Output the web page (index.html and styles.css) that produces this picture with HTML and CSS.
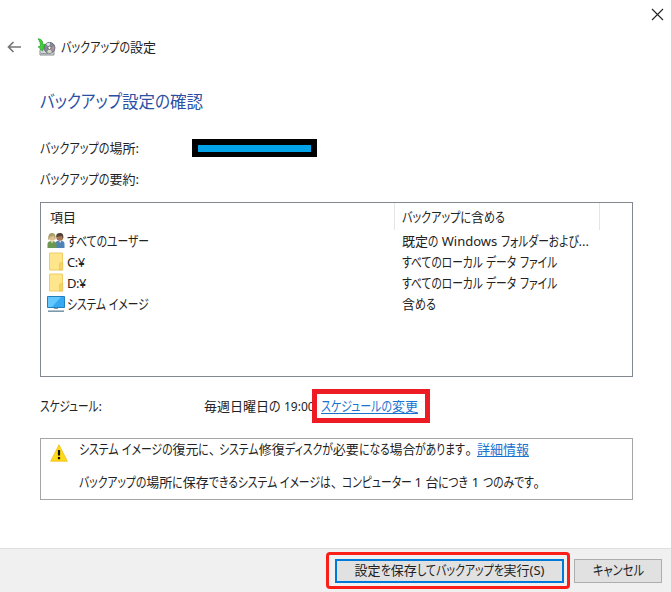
FILE: index.html
```html
<!DOCTYPE html>
<html lang="ja">
<head>
<meta charset="utf-8">
<title>バックアップの設定</title>
<link rel="stylesheet" href="styles.css">
</head>
<body>
<div class="window">
  <div class="titlebar">
    <svg class="close" width="13" height="13" viewBox="0 0 13 13"><path d="M1 1L12 12M12 1L1 12" stroke="#222" stroke-width="1.1" fill="none"/></svg>
  </div>
  <header class="nav">
    <svg class="back" width="14" height="12" viewBox="0 0 14 12"><path d="M14 6H1.5M6.5 1L1.5 6L6.5 11" fill="none" stroke="#777" stroke-width="1.7"/></svg>
    <svg class="app" width="19" height="18" viewBox="0 0 19 18">
      <path d="M3 12L6 9H15L17 12V17H3Z" fill="#d5d8da" stroke="#888e92"/>
      <path d="M4 15.5H11" stroke="#91999e"/>
      <circle cx="12.5" cy="9.8" r="5.4" fill="#85879a" stroke="#66666f"/>
      <path d="M12.5 9.8L9 6A5 5 0 0 1 13 4.8Z" fill="#dde4e8"/>
      <path d="M12.5 9.8L17.3 8.3A5 5 0 0 1 16 13.3Z" fill="#b58fa9"/>
      <path d="M12.5 9.8L15 14.3A5 5 0 0 1 10 14.3Z" fill="#d8dcc8"/>
      <circle cx="12.5" cy="9.8" r="1.7" fill="#f5f5f5" stroke="#666"/>
      <path d="M1 .8C4.5 1 6 3 6 7L8 6.2L5.5 13L1.2 8.8L3.3 8.3C3.7 5.5 3 3.5 1 .8Z" fill="#43cf3d" stroke="#29a52b" stroke-width=".8"/>
    </svg>
    <span class="t" data-width="95">バックアップの設定</span>
  </header>
  <main>
    <h1><span class="t" data-width="163">バックアップ設定の確認</span></h1>
    <div class="field location"><span class="t" data-width="99">バックアップの場所:</span><span class="redacted"></span></div>
    <div class="field summary"><span class="t" data-width="99">バックアップの要約:</span></div>
    <section class="list">
      <div class="row head"><div class="c1"><span class="t" data-width="26">項目</span></div><div class="c2"><span class="t" data-width="103">バックアップに含める</span></div></div>
      <div class="row"><div class="c1 item">
        <svg width="18" height="18" viewBox="0 0 18 18"><path d="M8.5 16V12C8.5 9.5 10 8.5 13 8.5C16 8.5 17.5 10 17.5 12V16Z" fill="#4f83b5"/><path d="M12 8.5L13.2 11L14.5 8.5Z" fill="#eee"/><circle cx="12.8" cy="5.2" r="3.5" fill="#a87654"/><path d="M9.3 5C9 1.8 10.7 1 13 1C15.5 1 17 2.7 16 6.7L14.8 4Z" fill="#54453b"/><path d="M.5 16V12C.5 10 2 9 5 9C8 9 9.5 10.3 9.5 12.5V16Z" fill="#6b9850"/><path d="M3.7 9L5 11.6L6.5 9Z" fill="#f3d4ab"/><circle cx="5" cy="5.5" r="3.2" fill="#e2bf91"/><path d="M1.3 8.5C1 3 2 1 5 1C8 1 9 3 8.4 8L6.7 3.7L3 5Z" fill="#aaa16a"/></svg>
        <span class="t" data-width="82">すべてのユーザー</span></div><div class="c2"><span class="t" data-width="187">既定の Windows フォルダーおよび...</span></div></div>
      <div class="row"><div class="c1 item">
        <svg width="18" height="19" viewBox="0 0 18 19"><path d="M2.5 1H15.5V18H2.5Z" fill="#ffe58c" stroke="#efcc65"/><path d="M12.5 18V11.5L13.5 10.5H15.8V18Z" fill="#f4d469" stroke="#e5c153" stroke-width=".6"/></svg>
        <span class="t drive">C:¥</span></div><div class="c2"><span class="t" data-width="155">すべてのローカル データ ファイル</span></div></div>
      <div class="row"><div class="c1 item">
        <svg width="18" height="19" viewBox="0 0 18 19"><path d="M2.5 1H15.5V18H2.5Z" fill="#ffe58c" stroke="#efcc65"/><path d="M12.5 18V11.5L13.5 10.5H15.8V18Z" fill="#f4d469" stroke="#e5c153" stroke-width=".6"/></svg>
        <span class="t drive">D:¥</span></div><div class="c2"><span class="t" data-width="155">すべてのローカル データ ファイル</span></div></div>
      <div class="row"><div class="c1 item">
        <svg width="18" height="18" viewBox="0 0 18 18"><path d="M.5 1.5H17.5V12.5H.5Z" fill="#35aaf2" stroke="#247fbd"/><path d="M1 2H14L5 12H1Z" fill="#64c8ff"/><path d="M7 13.5H11" stroke="#8b9aa4"/><path d="M1 16.2H17" stroke="#7999ac" stroke-width="1.6"/></svg>
        <span class="t" data-width="82">システム イメージ</span></div><div class="c2"><span class="t" data-width="34">含める</span></div></div>
    </section>
    <div class="schedule">
      <span class="label"><span class="t" data-width="62">スケジュール:</span></span>
      <span class="time"><span class="t" data-width="80">毎週日曜日の </span><span class="clock">19:00</span></span>
      <span class="highlight"><a class="t" data-width="97">スケジュールの変更</a></span>
    </div>
    <section class="note">
      <svg width="18" height="18" viewBox="0 0 18 18"><path d="M9 .8L17.3 17.2H.7Z" fill="#ffda19" stroke="#f1bd16" stroke-width=".8" stroke-linejoin="round"/><path d="M9 6V11.5M9 13V15.3" stroke="#111" stroke-width="2.2"/></svg>
      <div class="lines">
        <p><span class="t" data-width="397">システム イメージの復元に、システム修復ディスクが必要になる場合があります。</span><a class="t" data-width="52">詳細情報</a></p>
        <p><span class="t" data-width="465">バックアップの場所に保存できるシステム イメージは、コンピューター 1 台につき 1 つのみです。</span></p>
      </div>
    </section>
  </main>
  <footer>
    <div class="callout"><button class="primary"><span class="t" data-width="190">設定を保存してバックアップを実行(S)</span></button></div>
    <button class="cancel"><span class="t" data-width="51">キャンセル</span></button>
  </footer>
</div>
<script src="text.js"></script>
</body>
</html>
```
FILE: styles.css
```css
* { box-sizing: border-box; }
body { margin: 0; }
.window {
  width: 671px;
  height: 592px;
  display: flex;
  flex-direction: column;
  overflow: hidden;
  background: #fff;
  color: #222;
  font: 13px/20px "Noto Sans", "Noto Sans CJK JP", sans-serif;
  font-feature-settings: "palt";
}
.t { display: inline-block; white-space: pre; }
.kana { display: inline-block; transform-origin: 0 55%; white-space: pre; }
.punct { letter-spacing: 4px; }
.titlebar { height: 32px; display: flex; justify-content: flex-end; padding: 8px 7px 0 0; }
.nav { height: 30px; display: flex; align-items: center; padding-left: 7px; }
.app { margin: 0 5px 0 16px; }
main { flex: 1; padding: 0 38px 0 40px; }
h1 { height: 32px; margin: 24px 0 0; font-size: 16.5px; font-weight: 400; line-height: 32px; color: #2a4fa5; }
.field { display: flex; align-items: center; height: 20px; }
.location { margin-top: 20px; }
.summary { margin-top: 11px; }
.redacted { width: 125px; height: 18px; margin-left: 53px; border: 6px solid #000; border-width: 6px 6px 5px; background: #00a2e8; }
.list { height: 175px; margin-top: 13px; border: 1px solid #828790; }
.row { display: flex; height: 21px; align-items: center; }
.head { height: 27px; }
.c1 { width: 354px; padding-left: 9px; display: flex; align-items: center; }
.c2 { width: 205px; padding-left: 7px; display: flex; align-items: center; }
.head > div { height: 27px; border-right: 1px solid #e5e5e5; }
.item { padding-left: 6px; gap: 2px; }
.drive { letter-spacing: -.5px; }
.schedule { display: flex; align-items: center; height: 34px; margin-top: 12px; }
.label { width: 164px; }
.time { width: 108px; white-space: nowrap; }
.clock { font-size: 12px; }
.highlight { height: 34px; width: 118px; border: 5px solid #ed1c24; padding: 2px 4px; background: #fff; position: relative; }
a { color: #1873cf; height: 18px; border-bottom: 1px solid #1873cf; }
.note { display: flex; height: 62px; margin-top: 15px; padding: 5px 9px; border: 1px solid #a5a5a5; }
.lines { margin: -5px 0 0 11px; }
p { height: 20px; margin: 0 0 13px; white-space: nowrap; }
p a { margin-left: 1px; }
footer { height: 44px; display: flex; align-items: flex-start; padding: 3px 9px 0 326px; border-top: 1px solid #dfdfdf; background: #f0f0f0; }
.callout { width: 244px; height: 37px; padding: 4px 6px; border: 3px solid #fb1d18; border-radius: 4px; }
button { display: flex; align-items: center; justify-content: center; padding: 0 0 2px; border: 1px solid #adadad; background: #e1e1e1; color: #222; font: inherit; font-feature-settings: inherit; }
.primary { width: 229px; height: 24px; border: 2px solid #0078d7; }
.cancel { width: 88px; height: 24px; margin: 7px 0 0 4px; }
```
FILE: text.js
```js
// Condense the kana runs of each label so the label takes its set width.
document.querySelectorAll('.t[data-width]').forEach(label => {
  const parts = label.textContent.split(/([ぁ-んァ-ヶー]+|[、。])/).filter(Boolean);
  label.textContent = '';
  const runs = parts.map(text => {
    const run = document.createElement('span');
    run.textContent = text;
    run.className = /^[ぁ-んァ-ヶー]/.test(text) ? 'kana' : /[、。]/.test(text) ? 'punct' : 'plain';
    label.append(run);
    return run;
  });
  const size = run => run.getBoundingClientRect().width;
  const kana = runs.filter(run => run.className === 'kana');
  const fixed = runs.filter(run => run.className !== 'kana').reduce((sum, run) => sum + size(run), 0);
  const total = kana.reduce((sum, run) => sum + size(run), 0);
  const scale = total ? (label.dataset.width - fixed) / total : 1;
  kana.forEach(run => {
    const width = size(run);
    run.style.width = width * scale + 'px';
    run.style.transform = `scale(${scale}, 1.07)`;
  });
});
```
